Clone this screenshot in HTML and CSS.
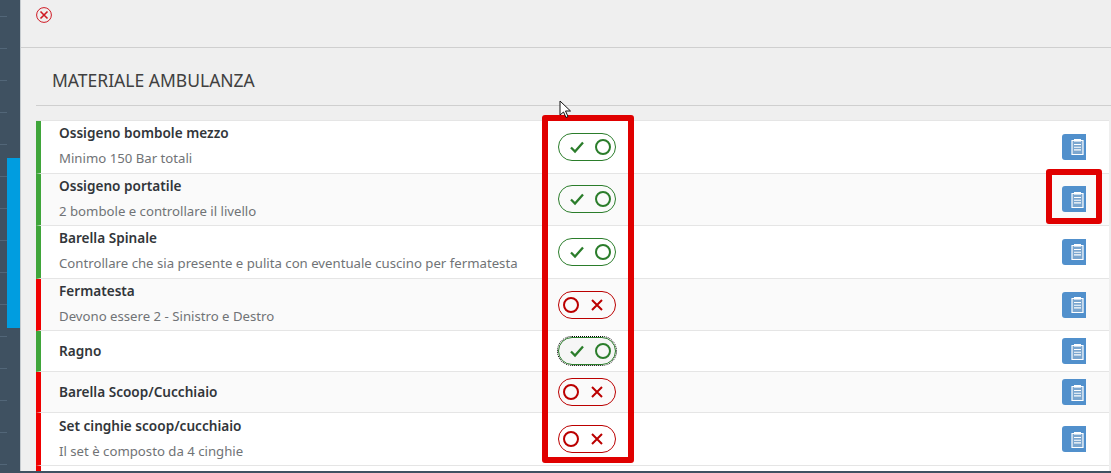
FILE: index.html
```html
<!DOCTYPE html>
<html lang="it">
<head>
<meta charset="utf-8">
<title>Materiale ambulanza</title>
<link rel="stylesheet" href="styles.css">
</head>
<body>
<div class="app">
  <aside class="rail"><div class="rail-active"></div></aside>
  <main class="dialog">
    <header class="toolbar">
      <svg class="close" width="16" height="16" viewBox="0 0 16 16"><circle cx="8" cy="8" r="7.4" fill="none" stroke="#cf1a24" stroke-width="1"/><path d="M4.5 4.5l7 7M11.5 4.5l-7 7" fill="none" stroke="#cf1a24" stroke-width="1.6"/></svg>
    </header>
    <h1 class="title">MATERIALE AMBULANZA</h1>
    <ul class="list">
      <li class="row ok tall"><div class="text"><b>Ossigeno bombole mezzo</b><span>Minimo 150 Bar totali</span></div>
        <div class="switch on"><svg width="18" height="18" viewBox="0 0 18 18"><path d="M3 9.5l4 4 8-9" /></svg><i></i></div>
        <div class="note"><svg width="13" height="17" viewBox="0 0 13 17"><use href="#clip"/></svg></div></li>
      <li class="row ok tall alt"><div class="text"><b>Ossigeno portatile</b><span>2 bombole e controllare il livello</span></div>
        <div class="switch on"><svg width="18" height="18" viewBox="0 0 18 18"><path d="M3 9.5l4 4 8-9" /></svg><i></i></div>
        <div class="note"><svg width="13" height="17" viewBox="0 0 13 17"><use href="#clip"/></svg></div></li>
      <li class="row ok tall"><div class="text"><b>Barella Spinale</b><span>Controllare che sia presente e pulita con eventuale cuscino per fermatesta</span></div>
        <div class="switch on"><svg width="18" height="18" viewBox="0 0 18 18"><path d="M3 9.5l4 4 8-9" /></svg><i></i></div>
        <div class="note"><svg width="13" height="17" viewBox="0 0 13 17"><use href="#clip"/></svg></div></li>
      <li class="row ko tall alt"><div class="text"><b>Fermatesta</b><span>Devono essere 2 - Sinistro e Destro</span></div>
        <div class="switch off"><i></i><svg width="18" height="18" viewBox="0 0 18 18"><path d="M4 4l10 10M14 4L4 14" /></svg></div>
        <div class="note"><svg width="13" height="17" viewBox="0 0 13 17"><use href="#clip"/></svg></div></li>
      <li class="row ok short"><div class="text"><b>Ragno</b></div>
        <div class="switch on focus"><svg width="18" height="18" viewBox="0 0 18 18"><path d="M3 9.5l4 4 8-9" /></svg><i></i></div>
        <div class="note"><svg width="13" height="17" viewBox="0 0 13 17"><use href="#clip"/></svg></div></li>
      <li class="row ko short alt"><div class="text"><b>Barella Scoop/Cucchiaio</b></div>
        <div class="switch off"><i></i><svg width="18" height="18" viewBox="0 0 18 18"><path d="M4 4l10 10M14 4L4 14" /></svg></div>
        <div class="note"><svg width="13" height="17" viewBox="0 0 13 17"><use href="#clip"/></svg></div></li>
      <li class="row ko tall"><div class="text"><b>Set cinghie scoop/cucchiaio</b><span>Il set è composto da 4 cinghie</span></div>
        <div class="switch off"><i></i><svg width="18" height="18" viewBox="0 0 18 18"><path d="M4 4l10 10M14 4L4 14" /></svg></div>
        <div class="note"><svg width="13" height="17" viewBox="0 0 13 17"><use href="#clip"/></svg></div></li>
      <li class="row ko end"></li>
    </ul>
  </main>
</div>
<div class="mark mark-switches"></div>
<div class="mark mark-note"></div>
<svg class="cursor" width="13" height="19" viewBox="0 0 13 19"><path d="M1 1v14l3.5-3 2.5 5.5 2-1L6.5 11H11.5z" fill="#fff" stroke="#111" stroke-width="1"/></svg>
<svg class="defs" width="0" height="0"><defs><g id="clip"><path d="M1 2.5h11v14H1z" fill="#7ba6cf" stroke="#fff" stroke-width="1.2"/><path d="M3 1h7v2.6H3z" fill="#fff"/><path d="M3 6.5h7M3 9.2h7M3 11.9h7" stroke="#fff" stroke-width="1.1"/></g></defs></svg>
</body>
</html>
```
FILE: styles.css
```css
* { box-sizing: border-box; }
html, body { margin: 0; height: 100%; overflow: hidden; }
body { font-family: "Noto Sans", "Liberation Sans", sans-serif; background: #3f5161; }
.app { display: flex; height: 473px; padding-bottom: 2px; }
.rail { width: 20px; flex: none; padding-top: 158px; padding-left: 7px; background-color: #3f5161; background-image: linear-gradient(transparent 16px, #526678 16px, #526678 17px, transparent 17px); background-size: 7px 32px; background-repeat: repeat-y; }
.rail-active { width: 13px; height: 170px; background: #009de0; }
.dialog { flex: 1; min-width: 0; background: #efefef; border-left: 1px solid #c6cbcf; overflow: hidden; }
.toolbar { height: 48px; padding: 7px 0 0 15px; border-bottom: 1px solid #cfcfcf; }
.close { display: block; }
.title { height: 58px; margin: 0 0 14px 15px; padding: 20px 0 0 16px; font-size: 17.5px; line-height: 24px; font-weight: 400; color: #404040; border-bottom: 1px solid #cfcfcf; }
.list { list-style: none; margin: 0 2px 0 15px; padding: 0; border-top: 1px solid #e5e5e5; }
.row { display: flex; align-items: center; background: #fff; border-left: 5px solid #3fa53a; border-bottom: 1px solid #e5e5e5; padding-left: 18px; color: #32363a; }
.row.alt { background: #fafafa; }
.row.ko { border-left-color: #f00000; }
.row.tall { height: 52.6px; }
.row.short { height: 41px; }
.row.end { height: 10px; }
.text { width: 499px; flex: none; display: flex; flex-direction: column; gap: 7px; }
.tall .text { margin-bottom: 2px; }
.text b { font-size: 13.6px; line-height: 18px; font-weight: 600; }
.text span { font-size: 13.2px; line-height: 18px; color: #707376; }
.switch { width: 58px; height: 28px; flex: none; display: flex; align-items: center; justify-content: space-between; padding: 0 4px 0 9px; border: 1px solid #2b7d2b; border-radius: 14px; }
.switch i { width: 16px; height: 16px; border: 2px solid #2b7d2b; border-radius: 50%; }
.switch svg { fill: none; stroke: #2b7d2b; stroke-width: 2.3; }
.switch.off { border-color: #bb0000; padding: 0 9px 0 4px; }
.switch.off i { border-color: #bb0000; }
.switch.off svg { stroke: #bb0000; stroke-width: 2; }
.switch.focus { outline: 1px dotted #000; outline-offset: 0; background: #f6f6f6; }
.note { width: 24px; height: 26px; margin-left: 446px; padding-right: 2px; flex: none; display: flex; align-items: center; justify-content: flex-end; background: #5190cc; border-radius: 3px 0 0 3px; }
.mark { position: absolute; border: 6px solid #e00000; border-radius: 3px; }
.mark-switches { left: 542px; top: 115px; width: 92px; height: 348px; }
.mark-note { left: 1046px; top: 169px; width: 56px; height: 55px; }
.cursor { position: absolute; left: 559px; top: 100px; }
.defs { position: absolute; }
```
